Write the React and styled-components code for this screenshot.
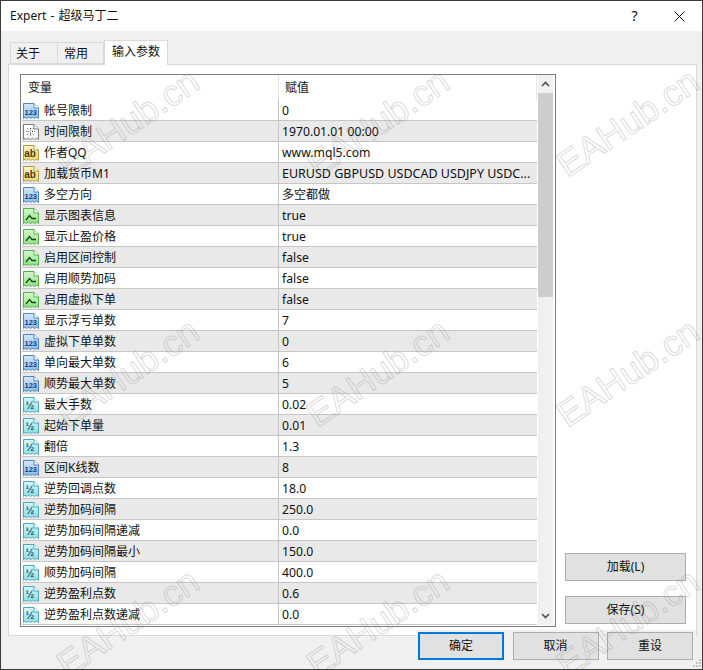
import React from "react";
import styled, { createGlobalStyle } from "styled-components";

const FONT = `"Noto Sans", "Noto Sans CJK SC", sans-serif`;

const Global = createGlobalStyle`
  html, body { margin: 0; padding: 0; background: #f0f0f0; overflow: hidden; }
  * { box-sizing: border-box; }
`;

const Window = styled.div`
  position: relative;
  width: 703px;
  height: 670px;
  border: 1px solid #3c3c3c;
  background: #f0f0f0;
  overflow: hidden;
  display: flex;
  flex-direction: column;
  font: 12px/16px ${FONT};
  color: #111;
`;

const TitleBar = styled.div`
  height: 30px;
  flex: none;
  background: #fff;
  display: flex;
  align-items: center;
  padding-left: 9px;
`;

const TitleText = styled.span`
  flex: 1;
  word-spacing: 1px;
`;

const TitleButton = styled.span`
  width: 45px;
  display: flex;
  justify-content: center;
  font-size: 14px;
  line-height: 14px;
`;

const TabStrip = styled.div`
  height: 33px;
  flex: none;
  display: flex;
  align-items: flex-end;
  padding-left: 9px;
  position: relative;
`;

const Tab = styled.div`
  height: ${(p) => (p.$active ? 25 : 22)}px;
  width: ${(p) => p.$w}px;
  margin-bottom: ${(p) => (p.$active ? -1 : 0)}px;
  background: ${(p) => (p.$active ? "#fff" : "#f0f0f0")};
  border: 1px solid #d9d9d9;
  border-bottom: ${(p) => (p.$active ? "none" : "1px solid #d9d9d9")};
  border-left: ${(p) => (p.$first || p.$active ? "1px solid #d9d9d9" : "none")};
  padding: 3px 0 0 ${(p) => p.$pad}px;
  position: relative;
  z-index: 1;
`;

const Panel = styled.div`
  height: 572px;
  flex: none;
  margin: 0 5px 0 7px;
  background: #fff;
  border: 1px solid #d9d9d9;
  padding: 9px 0 0 11px;
  display: flex;
  gap: 9px;
`;

const List = styled.div`
  width: 536px;
  height: 553px;
  flex: none;
  border: 1px solid #7b7b85;
  padding: 0 1px 0 1px;
  display: flex;
  background: #fff;
`;

const Table = styled.div`
  width: 515px;
  flex: none;
`;

const Header = styled.div`
  height: 25px;
  display: grid;
  grid-template-columns: 257px 1fr;
  align-items: center;
  border-right: 1px solid #e4e4e4;
`;

const HeaderCell = styled.div`
  height: 100%;
  padding: 5px 0 0 ${(p) => p.$pad}px;
  border-right: ${(p) => (p.$sep ? "1px solid #e4e4e4" : "none")};
`;

const Row = styled.div`
  height: 21px;
  display: grid;
  grid-template-columns: 257px 1fr;
  background: ${(p) => (p.$alt ? "#e9e9e9" : "#fff")};
  border-bottom: 1px solid #c6c6c6;
`;

const NameCell = styled.div`
  display: flex;
  align-items: center;
  gap: 5px;
  padding: 2px 0 0 1px;
  border-right: 1px solid #c6c6c6;
  white-space: nowrap;
`;

const ValueCell = styled.div`
  display: flex;
  align-items: center;
  padding: 2px 0 0 3px;
  white-space: nowrap;
  font-size: ${(p) => p.$size}px;
`;

const Scrollbar = styled.div`
  width: 15px;
  margin-left: 1px;
  height: 550px;
  background: #f0f0f0;
  display: flex;
  flex-direction: column;
`;

const ScrollArrow = styled.div`
  height: 18px;
  flex: none;
  display: flex;
  align-items: center;
  justify-content: center;
`;

const ScrollThumb = styled.div`
  height: 204px;
  flex: none;
  background: #cdcdcd;
`;

const ScrollTrack = styled.div`
  flex: 1;
`;

const Side = styled.div`
  width: 121px;
  flex: none;
  display: flex;
  flex-direction: column;
  justify-content: flex-end;
  gap: 15px;
  padding-bottom: 11px;
`;

const Button = styled.div`
  width: ${(p) => p.$w}px;
  height: 28px;
  flex: none;
  background: #e1e1e1;
  border: ${(p) => (p.$primary ? "2px solid #0078d7" : "1px solid #adadad")};
  display: flex;
  align-items: center;
  justify-content: center;
`;

const Footer = styled.div`
  align-self: flex-end;
  margin: -6px 6px 0 0;
  height: 39px;
  width: 280px;
  background: #f0f0f0;
  padding: 2px 3px 0 2px;
  display: flex;
  gap: 8.5px;
  position: relative;
`;

const Grip = styled.svg`
  position: absolute;
  right: 1px;
  bottom: 1px;
`;

const Watermarks = styled.div`
  position: absolute;
  left: 2px;
  top: -3px;
  width: 750px;
  height: 750px;
  display: grid;
  grid-template-columns: repeat(3, 250px);
  grid-auto-rows: 250px;
  pointer-events: none;
  z-index: 5;
`;

const Mark = styled.div`
  display: flex;
  align-items: center;
  justify-content: center;
  font: 36px/40px "Liberation Sans", sans-serif;
  color: transparent;
  -webkit-text-stroke: 1px rgba(130, 130, 130, 0.3);
  transform: rotate(-34deg);
`;

const ICONS = {
  int: { top: "#d7e8f8", fill: "#8fbbe6", edge: "#4f86c0", text: "#123f7a", label: "123" },
  str: { top: "#fbf4c4", fill: "#ecd97a", edge: "#b09a3e", text: "#4a3c08", label: "ab" },
  dbl: { top: "#d8f4f6", fill: "#92dde4", edge: "#4aaabc", text: "#0e5c70", label: "½" },
  bool: { top: "#d6f6ce", fill: "#92e084", edge: "#52b44c", text: "#124e12", label: "" },
  date: { top: "#ffffff", fill: "#f6f6f6", edge: "#7e7e7e", text: "#333", label: "" },
};

const LABEL_SIZE = { int: 7.5, str: 10, dbl: 10.5 };

function TypeIcon({ kind }) {
  const c = ICONS[kind];
  const grad = `grad-${kind}`;
  return (
    <svg width="16" height="16" viewBox="0 0 16 16" style={{ flex: "none" }}>
      <defs>
        <linearGradient id={grad} x1="0" y1="0" x2="0" y2="1">
          <stop offset="0" stopColor={c.top} />
          <stop offset="1" stopColor={c.fill} />
        </linearGradient>
      </defs>
      <path
        d="M0.5 0.5H11L15.5 5V15.5L13.5 14.2L11.5 15.5L9.5 14.2L7.5 15.5L5.5 14.2L3.5 15.5L2 14.2L0.5 15.5Z"
        fill={`url(#${grad})`}
        stroke={c.edge}
      />
      <path d="M11 0.5V5H15.5" fill="#fff" stroke={c.edge} />
      {c.label && (
        <text
          x={kind === "int" ? 7.8 : 7}
          y={kind === "int" ? 11.5 : 12}
          textAnchor="middle"
          fontFamily="Liberation Sans, sans-serif"
          fontWeight="700"
          fontSize={LABEL_SIZE[kind]}
          fill={c.text}
        >
          {c.label}
        </text>
      )}
      {kind === "bool" && <path d="M3 12L6.5 7.5L9 10.5H13" fill="none" stroke={c.text} strokeWidth="1.3" />}
      {kind === "date" && (
        <path
          d="M7.5 4V6.5M7.5 8.5V11.5M3.5 7.5H6M9 7.5H11.5M4.5 4.5L6 6M10.5 4.5L9 6M4.5 10.5L6 9M10.5 10.5L9 9"
          fill="none"
          stroke="#222"
          strokeDasharray="1 1"
        />
      )}
    </svg>
  );
}

const ROWS = [
  ["int", "帐号限制", "0"],
  ["date", "时间限制", "1970.01.01 00:00"],
  ["str", "作者QQ", "www.mql5.com"],
  ["str", "加载货币M1", "EURUSD GBPUSD USDCAD USDJPY USDC...", 12.5],
  ["int", "多空方向", "多空都做", 12],
  ["bool", "显示图表信息", "true"],
  ["bool", "显示止盈价格", "true"],
  ["bool", "启用区间控制", "false"],
  ["bool", "启用顺势加码", "false"],
  ["bool", "启用虚拟下单", "false"],
  ["int", "显示浮亏单数", "7"],
  ["int", "虚拟下单单数", "0"],
  ["int", "单向最大单数", "6"],
  ["int", "顺势最大单数", "5"],
  ["dbl", "最大手数", "0.02"],
  ["dbl", "起始下单量", "0.01"],
  ["dbl", "翻倍", "1.3"],
  ["int", "区间K线数", "8"],
  ["dbl", "逆势回调点数", "18.0"],
  ["dbl", "逆势加码间隔", "250.0"],
  ["dbl", "逆势加码间隔递减", "0.0"],
  ["dbl", "逆势加码间隔最小", "150.0"],
  ["dbl", "顺势加码间隔", "400.0"],
  ["dbl", "逆势盈利点数", "0.6"],
  ["dbl", "逆势盈利点数递减", "0.0"],
];

export default function App() {
  return (
    <>
      <Global />
      <Window>
        <TitleBar>
          <TitleText>Expert - 超级马丁二</TitleText>
          <TitleButton>?</TitleButton>
          <TitleButton>
            <svg width="11" height="11" viewBox="0 0 11 11">
              <path d="M0.5 0.5L10.5 10.5M10.5 0.5L0.5 10.5" stroke="#111" fill="none" />
            </svg>
          </TitleButton>
        </TitleBar>
        <TabStrip>
          <Tab $w={48} $pad={5} $first>关于</Tab>
          <Tab $w={46} $pad={6}>常用</Tab>
          <Tab $w={64} $pad={7} $active>输入参数</Tab>
        </TabStrip>
        <Panel>
          <List>
            <Table>
              <Header>
                <HeaderCell $pad={6} $sep>变量</HeaderCell>
                <HeaderCell $pad={6}>赋值</HeaderCell>
              </Header>
              {ROWS.map(([kind, name, value, size], i) => (
                <Row key={name} $alt={i % 2 === 1}>
                  <NameCell>
                    <TypeIcon kind={kind} />
                    {name}
                  </NameCell>
                  <ValueCell $size={size || 12.2}>{value}</ValueCell>
                </Row>
              ))}
            </Table>
            <Scrollbar>
              <ScrollArrow>
                <svg width="9" height="6" viewBox="0 0 9 6">
                  <path d="M1 5L4.5 1.5L8 5" stroke="#505050" strokeWidth="1.6" fill="none" />
                </svg>
              </ScrollArrow>
              <ScrollThumb />
              <ScrollTrack />
              <ScrollArrow>
                <svg width="9" height="6" viewBox="0 0 9 6">
                  <path d="M1 1L4.5 4.5L8 1" stroke="#505050" strokeWidth="1.6" fill="none" />
                </svg>
              </ScrollArrow>
            </Scrollbar>
          </List>
          <Side>
            <Button $w={121}>加载(L)</Button>
            <Button $w={121}>保存(S)</Button>
          </Side>
        </Panel>
        <Footer>
          <Button $w={86} $primary>确定</Button>
          <Button $w={86}>取消</Button>
          <Button $w={86}>重设</Button>
        </Footer>
        <Grip width="9" height="9" viewBox="0 0 9 9">
          <path d="M7 0h2v2H7zM4 3h2v2H4zM7 3h2v2H7zM1 6h2v2H1zM4 6h2v2H4zM7 6h2v2H7z" fill="#c4c4c4" />
        </Grip>
        <Watermarks>
          {Array.from({ length: 9 }, (_, i) => (
            <Mark key={i}>EAHub.cn</Mark>
          ))}
        </Watermarks>
      </Window>
    </>
  );
}
